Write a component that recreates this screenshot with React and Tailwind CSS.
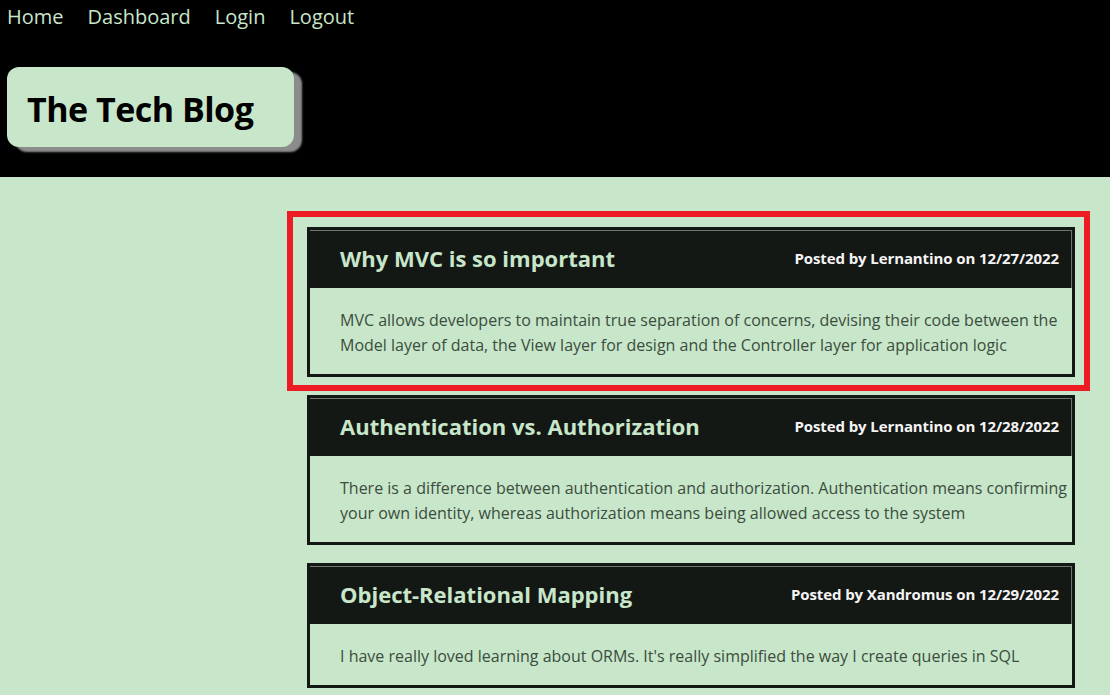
import React from "react";

const posts = [
  {
    title: "Why MVC is so important",
    meta: "Posted by Lernantino on 12/27/2022",
    lines: [
      "MVC allows developers to maintain true separation of concerns, devising their code between the",
      "Model layer of data, the View layer for design and the Controller layer for application logic",
    ],
  },
  {
    title: "Authentication vs. Authorization",
    meta: "Posted by Lernantino on 12/28/2022",
    lines: [
      "There is a difference between authentication and authorization. Authentication means confirming",
      "your own identity, whereas authorization means being allowed access to the system",
    ],
  },
  {
    title: "Object-Relational Mapping",
    meta: "Posted by Xandromus on 12/29/2022",
    lines: [
      "I have really loved learning about ORMs. It's really simplified the way I create queries in SQL",
    ],
  },
];

function Post({ post, highlight }) {
  return (
    <div className="relative">
      {highlight && (
        <div className="absolute -left-[20px] -top-[16px] -right-[15px] -bottom-[14px] border-[6px] border-[#ed1c24] pointer-events-none" />
      )}
      <div className="border-[3px] border-[#141815] bg-[#c8e6c9]">
        <div className="h-[58px] bg-[#141815] border-t border-r border-[#6f756f] flex items-center justify-between pl-[30px] pr-[12px]">
          <h2 className="text-[22px] font-bold text-[#c8e6c9] leading-none -mt-[4px]">{post.title}</h2>
          <span className="text-[15px] font-bold text-[#f4f4f4] -mt-[2px] tracking-[-0.1px]">{post.meta}</span>
        </div>
        <div className="pl-[30px] pr-[2px] pt-[20px] pb-[16px] text-[16px] leading-[25px] text-[#3b4d3e]">
          {post.lines.map((l, i) => (
            <div key={i} className="whitespace-nowrap">{l}</div>
          ))}
        </div>
      </div>
    </div>
  );
}

export default function App() {
  return (
    <div className="min-h-[695px] bg-[#c8e6c9]" style={{ fontFamily: '"Open Sans", "Noto Sans", sans-serif' }}>
      <header className="bg-black h-[177px] pt-[2px]">
        <nav className="flex gap-[24px] pl-[7px] text-[20px] text-[#c8e6c9] leading-[30px]">
          <a>Home</a>
          <a>Dashboard</a>
          <a>Login</a>
          <a>Logout</a>
        </nav>
        <div className="mt-[35px] ml-[7px] w-[287px] h-[80px] rounded-[12px] bg-[#c8e6c9] shadow-[8px_5px_2px_#8c8c8c] flex items-center pl-[20px]">
          <h1 className="text-[34px] font-bold text-black tracking-[-0.5px] mt-[4px]">The Tech Blog</h1>
        </div>
      </header>
      <main className="pl-[307px] pt-[50px] pb-[8px]">
        <div className="w-[768px] flex flex-col gap-[18px]">
          {posts.map((p, i) => (
            <Post key={i} post={p} highlight={i === 0} />
          ))}
        </div>
      </main>
    </div>
  );
}
